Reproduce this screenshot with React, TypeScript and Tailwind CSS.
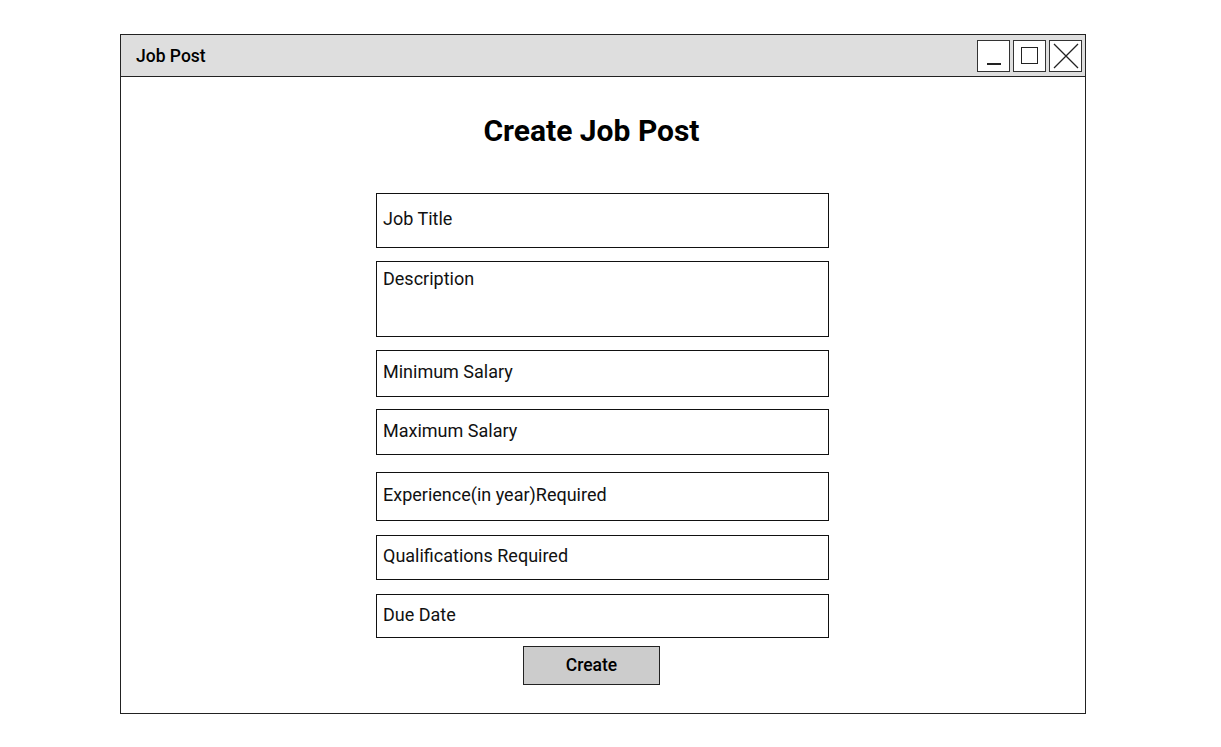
export default function App() {
  const fields = [
    { label: "Job Title", h: "h-[55px]", mt: "mt-0", top: false },
    { label: "Description", h: "h-[76px]", mt: "mt-[13px]", top: true },
    { label: "Minimum Salary", h: "h-[47px]", mt: "mt-[13px]", top: false },
    { label: "Maximum Salary", h: "h-[46px]", mt: "mt-[12px]", top: false },
    { label: "Experience(in year)Required", h: "h-[49px]", mt: "mt-[17px]", top: false },
    { label: "Qualifications Required", h: "h-[45px]", mt: "mt-[14px]", top: false },
    { label: "Due Date", h: "h-[44px]", mt: "mt-[14px]", top: false },
  ];

  return (
    <div
      className="w-[1221px] h-[747px] bg-white pt-[34px] pl-[120px]"
      style={{ fontFamily: "Roboto, 'Liberation Sans', sans-serif" }}
    >
      <div className="w-[966px] h-[680px] border-[1.5px] border-[#222] flex flex-col">
        {/* Title bar */}
        <div className="h-[42px] bg-[#dedede] border-b-[1.5px] border-[#222] flex items-center justify-between pl-[15px] pr-[3px]">
          <span className="text-[17.5px] font-medium text-black pt-[1px]">Job Post</span>
          <div className="flex gap-[3px]">
            <div className="w-[33px] h-[32px] bg-white border border-[#333] flex items-end justify-center pb-[6px]">
              <div className="w-[14px] h-[1.5px] bg-[#222]" />
            </div>
            <div className="w-[33px] h-[32px] bg-white border border-[#333] flex items-center justify-center">
              <div className="w-[17px] h-[17px] border-[1.5px] border-[#222]" />
            </div>
            <div className="w-[33px] h-[32px] bg-white border border-[#333] flex items-center justify-center">
              <svg width="26" height="26" viewBox="0 0 26 26">
                <path d="M1 1 L25 25 M25 1 L1 25" stroke="#222" strokeWidth="1.3" fill="none" />
              </svg>
            </div>
          </div>
        </div>

        {/* Body */}
        <div className="flex flex-col pl-[255px] pt-[37px]">
          <h1 className="w-[431px] text-center text-[30px] font-bold text-black leading-[34px]">
            Create Job Post
          </h1>

          <div className="mt-[45px] flex flex-col">
            {fields.map((f) => (
              <div
                key={f.label}
                className={`w-[453px] ${f.h} ${f.mt} border-[1.5px] border-[#111] flex ${
                  f.top ? "items-start pt-[3px]" : "items-center pb-[4px]"
                } px-[6px]`}
              >
                <span className="text-[18px] text-[#111]">{f.label}</span>
              </div>
            ))}
          </div>

          <div className="w-[431px] flex justify-center mt-[8px]">
            <button className="w-[137px] h-[39px] bg-[#cccccc] border border-[#222] text-[17.5px] font-medium text-black">
              Create
            </button>
          </div>
        </div>
      </div>
    </div>
  );
}
